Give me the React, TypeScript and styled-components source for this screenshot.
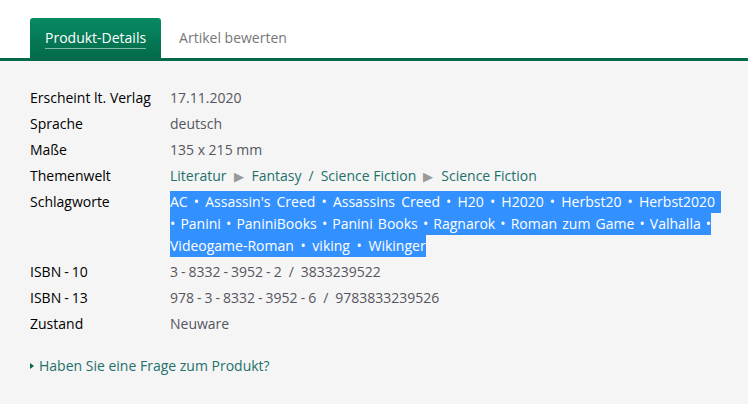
import React from "react";
import styled, { createGlobalStyle } from "styled-components";

const GlobalStyle = createGlobalStyle`
  html, body {
    margin: 0;
    padding: 0;
    background: #ffffff;
  }
  body {
    font-family: "Open Sans", "Noto Sans", sans-serif;
    font-size: 14px;
    color: #222;
  }
`;

const Page = styled.div`
  width: 748px;
  height: 404px;
  display: flex;
  flex-direction: column;
  background: #f5f5f5;
`;

const TabBar = styled.div`
  display: flex;
  align-items: flex-end;
  height: 58px;
  padding-left: 30px;
  background: #fff;
  border-bottom: 3px solid #036a4c;
`;

const Tab = styled.div<{ $active?: boolean }>`
  height: 40px;
  display: flex;
  align-items: center;
  padding: 0 15px;
  border-radius: 3px 3px 0 0;
  font-size: 14px;
  color: ${(p) => (p.$active ? "#fff" : "#777")};
  background: ${(p) =>
    p.$active ? "linear-gradient(to bottom, #088a63, #026b4b)" : "transparent"};
  margin-right: ${(p) => (p.$active ? "3px" : "0")};
`;

const TabLabel = styled.span<{ $active?: boolean }>`
  border-bottom: ${(p) => (p.$active ? "1px solid rgba(255,255,255,0.5)" : "none")};
  line-height: 20px;
`;

const Panel = styled.div`
  padding: 26px 30px 0 30px;
`;

const Table = styled.div`
  display: grid;
  grid-template-columns: 140px 1fr;
  row-gap: 4px;
`;

const Label = styled.div`
  line-height: 22px;
  color: #000;
  font-weight: 500;
`;

const Value = styled.div`
  line-height: 22px;
  color: #555560;
`;

const Dash = styled.span`
  margin: 0 3px;
`;

const Slash = styled.span`
  margin: 0 7px;
`;

const Crumb = styled.span`
  color: #23706a;
`;

const Arrow = styled.span`
  color: #999;
  font-size: 13px;
  margin: 0 8px 0 7px;
`;

const Tags = styled.div`
  display: flex;
  flex-direction: column;
  align-items: flex-start;
`;

const TagLine = styled.span<{ $spacing: number }>`
  display: block;
  line-height: 22px;
  background: #3390ff;
  color: #fff;
  white-space: pre;
  word-spacing: ${(p) => p.$spacing}px;
`;

const Question = styled.div`
  margin-top: 20px;
  display: flex;
  align-items: center;
  gap: 5px;
  color: #23706a;
  line-height: 22px;
`;

const Bullet = styled.span`
  width: 0;
  height: 0;
  border-top: 3px solid transparent;
  border-bottom: 3px solid transparent;
  border-left: 4px solid #036a4c;
`;

const tagLines = [
  {
    lead: "",
    tags: ["AC", "Assassin's Creed", "Assassins Creed", "H20", "H2020", "Herbst20", "Herbst2020"],
    tail: " ",
    spacing: 2.5,
  },
  {
    lead: "• ",
    tags: ["Panini", "PaniniBooks", "Panini Books", "Ragnarok", "Roman zum Game", "Valhalla"],
    tail: " •",
    spacing: 1.5,
  },
  { lead: "", tags: ["Videogame-Roman", "viking", "Wikinger"], tail: "", spacing: 3 },
];

function Spaced({ text }: { text: string }) {
  const parts = text.split("-");
  return (
    <>
      {parts.map((part, i) => (
        <React.Fragment key={i}>
          {i > 0 && <Dash>-</Dash>}
          {part}
        </React.Fragment>
      ))}
    </>
  );
}

export default function App() {
  return (
    <>
      <GlobalStyle />
      <Page>
        <TabBar>
          <Tab $active>
            <TabLabel $active>Produkt-Details</TabLabel>
          </Tab>
          <Tab>
            <TabLabel>Artikel bewerten</TabLabel>
          </Tab>
        </TabBar>
        <Panel>
          <Table>
            <Label>Erscheint lt. Verlag</Label>
            <Value>17.11.2020</Value>
            <Label>Sprache</Label>
            <Value>deutsch</Value>
            <Label>Maße</Label>
            <Value>135 x 215 mm</Value>
            <Label>Themenwelt</Label>
            <Value>
              <Crumb>Literatur</Crumb>
              <Arrow>▶</Arrow>
              <Crumb>
                Fantasy<Slash>/</Slash>Science Fiction
              </Crumb>
              <Arrow>▶</Arrow>
              <Crumb>Science Fiction</Crumb>
            </Value>
            <Label>Schlagworte</Label>
            <Tags>
              {tagLines.map((line, li) => (
                <TagLine key={li} $spacing={line.spacing}>
                  {line.lead}
                  {line.tags.join(" • ")}
                  {line.tail}
                </TagLine>
              ))}
            </Tags>
            <Label>
              <Spaced text="ISBN-10" />
            </Label>
            <Value>
              <Spaced text="3-8332-3952-2" />
              <Slash>/</Slash>3833239522
            </Value>
            <Label>
              <Spaced text="ISBN-13" />
            </Label>
            <Value>
              <Spaced text="978-3-8332-3952-6" />
              <Slash>/</Slash>9783833239526
            </Value>
            <Label>Zustand</Label>
            <Value>Neuware</Value>
          </Table>
          <Question>
            <Bullet />
            Haben Sie eine Frage zum Produkt?
          </Question>
        </Panel>
      </Page>
    </>
  );
}
